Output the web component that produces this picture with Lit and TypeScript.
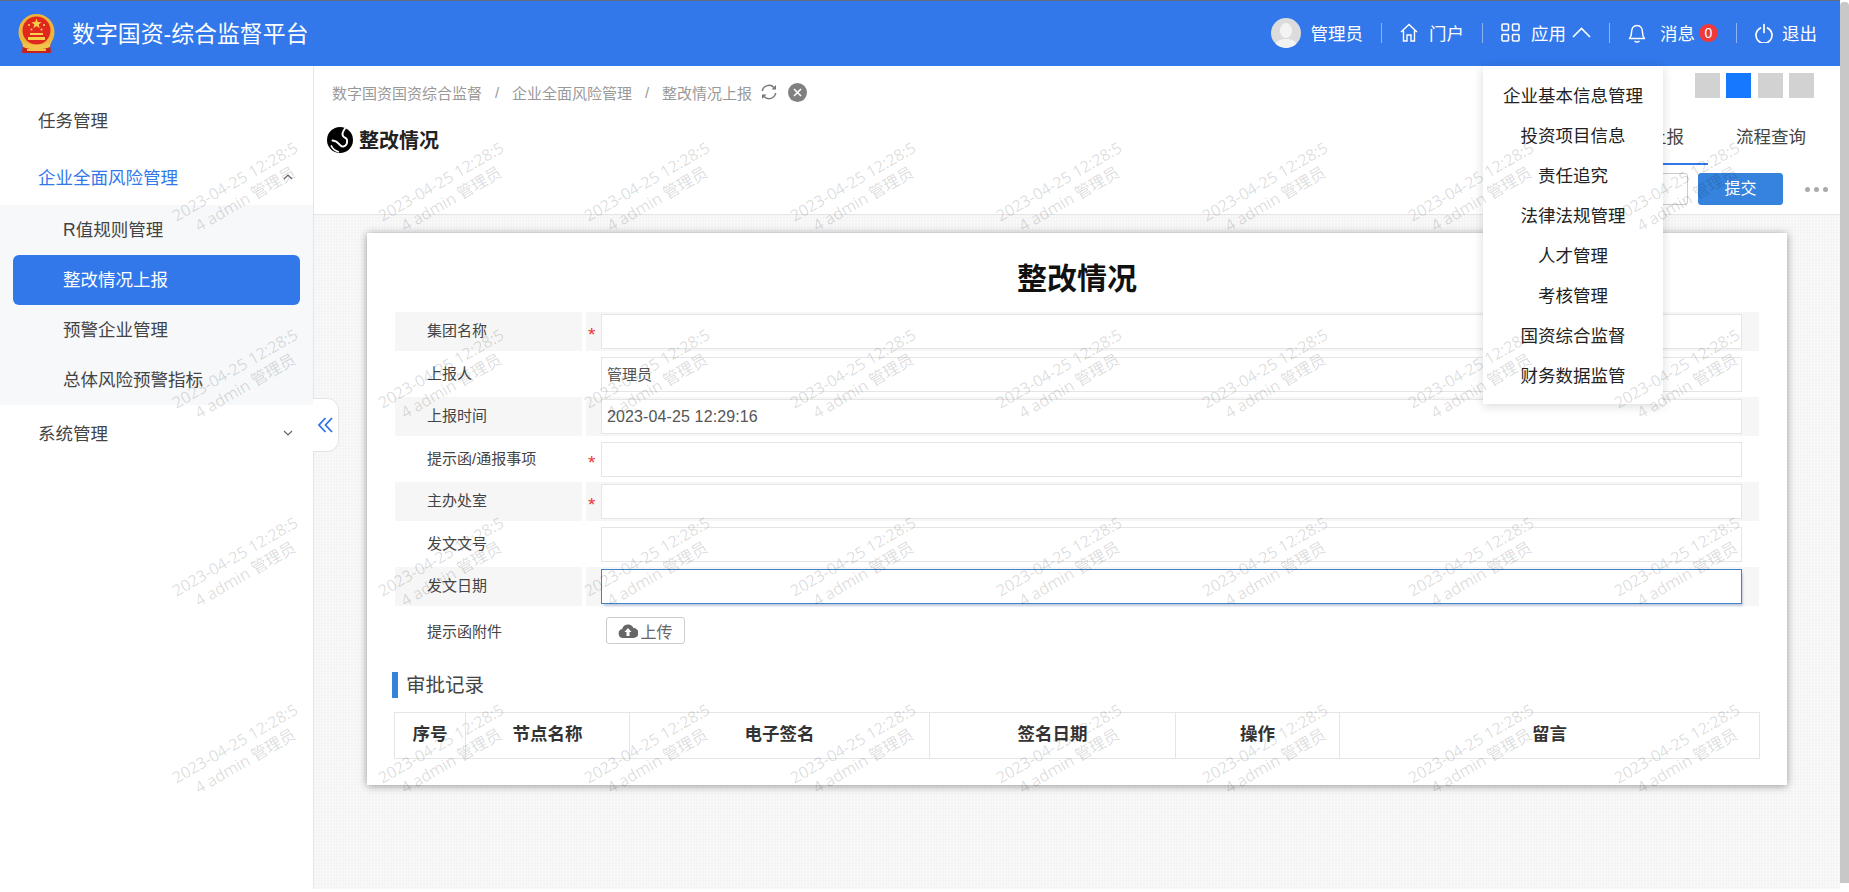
import { LitElement, html, css } from "lit";
import { customElement } from "lit/decorators.js";

const FORM_ROWS = [
  { label: "集团名称", required: true, value: "" },
  { label: "上报人", required: false, value: "管理员" },
  { label: "上报时间", required: false, value: "2023-04-25 12:29:16" },
  { label: "提示函/通报事项", required: true, value: "" },
  { label: "主办处室", required: true, value: "" },
  { label: "发文文号", required: false, value: "" },
  { label: "发文日期", required: false, value: "", focused: true },
];
const APP_MENU = ["企业基本信息管理", "投资项目信息", "责任追究", "法律法规管理", "人才管理", "考核管理", "国资综合监督", "财务数据监管"];
const TABLE_HEAD = ["序号", "节点名称", "电子签名", "签名日期", "操作", "留言"];

@customElement("app-root")
export class AppRoot extends LitElement {
  static styles = css`
    :host {
      display: block;
      width: 1849px;
      height: 892px;
      overflow: hidden;
      position: relative;
      background: #fff;
      font-family: "Liberation Sans", "Noto Sans CJK SC", sans-serif;
      color: #333;
    }
    .shell { display: flex; height: 889px; }
    .page { flex: 1; min-width: 0; display: flex; flex-direction: column; }
    .scrollbar { width: 9px; height: 881px; margin-top: 2px; background: #c8c8c8; border-radius: 4px 4px 0 0; }

    header {
      height: 66px;
      box-sizing: border-box;
      border-top: 1px solid #5f6b80;
      background: #3278ea;
      color: #fff;
      display: flex;
      align-items: center;
      flex: none;
      position: relative;
      z-index: 3;
    }
    .logo { margin-left: 18px; flex: none; display: block; }
    .brand { margin-left: 17px; font-size: 22.9px; flex: 1; padding-bottom: 3px; }
    .nav { display: flex; align-items: center; height: 100%; padding-right: 5px; font-size: 17.5px; }
    .nav-item { display: flex; align-items: center; height: 100%; box-sizing: border-box; padding: 0 18px 2px; gap: 11px; position: relative; }
    .nav-item svg { flex: none; display: block; }
    .nav-item.user { gap: 10px; }
    .nav-item.msg { gap: 14px; }
    .nav-item.quit { gap: 9px; }
    .divider { width: 1px; height: 20px; margin-bottom: 2px; background: rgba(255, 255, 255, 0.45); }
    .msg-text { display: flex; align-items: center; gap: 4px; }
    .badge {
      width: 19px; height: 18px; border-radius: 9px; background: #ee3a3a;
      font-size: 14px; line-height: 18px; text-align: center;
    }
    .apps-text { display: flex; align-items: center; gap: 6px; }
    .app-menu {
      position: absolute; left: 0; top: 100%; width: 180px;
      background: #fff; color: #222; padding: 10px 0 8px;
      box-shadow: 0 2px 10px rgba(0, 0, 0, 0.15);
    }
    .app-menu div { height: 40px; line-height: 40px; text-align: center; }

    .body { flex: 1; display: flex; min-height: 0; }
    .sidebar {
      width: 313px; flex: none; box-sizing: content-box; padding-top: 25px;
      background: #fff; border-right: 1px solid #e5e5e5; position: relative;
      font-size: 17.5px; color: #444;
    }
    .menu { height: 57px; display: flex; align-items: center; justify-content: space-between; padding: 0 20px 0 38px; }
    .menu.open { color: #3278ea; }
    .menu.last { margin-top: -1px; }
    .menu svg { display: block; }
    .sub { background: #f6f8fa; }
    .sub div { height: 50px; line-height: 50px; padding-left: 63px; }
    .sub .active {
      background: #3278ea; color: #fff; margin: 0 13px; padding-left: 50px; border-radius: 6px;
    }
    .collapse {
      position: absolute; left: 313px; top: 332px; width: 26px; height: 54px; box-sizing: border-box;
      background: #fff; border: 1px solid #e5e5e5; border-left: 0; border-radius: 0 12px 12px 0;
      display: flex; align-items: center; justify-content: center;
    }

    .main { flex: 1; min-width: 0; display: flex; flex-direction: column; }
    .top { flex: none; height: 149px; box-sizing: border-box; background: #fff; border-bottom: 1px solid #e5e5e5; padding-top: 7px; }
    .row1 { height: 38px; display: flex; justify-content: space-between; padding: 0 26px 0 18px; }
    .crumbs { display: flex; align-items: center; font-size: 15px; color: #999; }
    .crumbs .sep { width: 30px; text-align: center; }
    .crumbs .refresh { margin-left: 8px; }
    .crumbs .close { margin-left: 10px; }
    .swatches { display: flex; gap: 6.5px; }
    .swatches i { display: block; width: 25px; height: 25px; background: #d2d2d2; }
    .swatches i.on { background: #1677ff; }
    .row2 { height: 54px; display: flex; justify-content: space-between; padding: 0 10px 0 13px; }
    .page-title { display: flex; align-items: center; gap: 6px; font-size: 20px; font-weight: 700; color: #222; padding-top: 3px; height: 51px; }
    .tabs { display: flex; font-size: 17.5px; color: #444; }
    .tab { height: 54px; box-sizing: border-box; padding: 0 24px; line-height: 52px; }
    .tab.on { border-bottom: 2px solid #3278ea; }
    .tab + .tab { margin-left: 4px; }
    .row3 { display: flex; justify-content: flex-end; align-items: center; height: 32px; margin-top: 8px; padding-right: 12px; }
    .btn { width: 85px; height: 32px; box-sizing: border-box; border-radius: 3px; font-size: 16px; line-height: 30px; text-align: center; }
    .btn.plain { border: 1px solid #ccc; margin-right: 10px; color: #555; }
    .btn.primary { background: #3583dc; color: #fff; border: 1px solid #3583dc; }
    .dots { display: flex; gap: 4px; margin-left: 22px; }
    .dots i { width: 5px; height: 5px; border-radius: 50%; background: #aaa; }

    .canvas {
      flex: 1; padding: 18px 53px 0 53px;
      background-color: #f4f4f4;
      background-image:
        repeating-linear-gradient(0deg, rgba(255, 255, 255, 0.35) 0 1px, transparent 1px 3px),
        repeating-linear-gradient(90deg, rgba(255, 255, 255, 0.35) 0 1px, transparent 1px 3px);
    }
    .card {
      height: 552px; box-sizing: border-box; background: #fff; padding: 24px 27px 0 27px;
      box-shadow: 0 1px 8px rgba(0, 0, 0, 0.4);
    }
    h1 { margin: 0 0 11px; font-size: 30px; line-height: 44px; font-weight: 700; text-align: center; color: #111; }
    .form { margin: 0 1px; display: grid; grid-template-columns: 187px 1fr; grid-auto-rows: 39px; column-gap: 4px; row-gap: 3.5px; font-size: 15px; }
    .label { padding-left: 32px; line-height: 37px; color: #444; }
    .value { position: relative; padding: 2px 17px 2px 15px; }
    .shade { background: #f6f6f6; }
    .star { position: absolute; left: 2px; top: 11px; color: #e33; font-size: 19px; line-height: 24px; }
    .input {
      height: 35px; box-sizing: border-box; border: 1px solid #e5e5e5; background: #fff;
      padding-left: 5px; line-height: 33px; font-size: 15px; color: #555;
    }
    .input.focus { border-color: #3f84c8; box-shadow: 2px 3px 2px -1px #c5cbe0; }
    .input.date { font-size: 16px; letter-spacing: 0.12px; }
    .upload-row { grid-column: 1 / -1; display: grid; grid-template-columns: 187px 1fr; column-gap: 4px; height: 39px; }
    .upload-row .label { line-height: 43px; }
    .upload-cell { padding: 7.5px 0 0 20px; }
    .upload {
      width: 79px; height: 27px; box-sizing: border-box; border: 1px solid #ccc; border-radius: 3px;
      display: flex; align-items: center; justify-content: center; gap: 2px; font-size: 16px; color: #666;
    }
    .section {
      margin: 23.5px 0 0 -2px; height: 26px; border-left: 6px solid #3583dc; padding-left: 8px;
      font-size: 19.5px; line-height: 26px; color: #444;
    }
    .table {
      margin-top: 14px; height: 47px; box-sizing: border-box; border: 1px solid #e5e5e5;
      display: grid; grid-template-columns: 70px 164px 300px 246px 164px 1fr;
      font-size: 17.5px; font-weight: 700; color: #333;
    }
    .table div { line-height: 43px; text-align: center; border-left: 1px solid #e5e5e5; }
    .table div:first-child { border-left: 0; }

    .watermarks {
      position: absolute; left: 137px; top: 96px; pointer-events: none; z-index: 5;
      display: grid; grid-template-columns: repeat(8, 206px); grid-auto-rows: 187.5px;
      font-family: "Open Sans", "Noto Sans CJK SC", sans-serif; font-size: 16px; line-height: 20px; color: rgba(0, 0, 0, 0.15);
    }
    .wm { display: flex; align-items: center; justify-content: center; }
    .wm span { display: block; white-space: nowrap; text-align: center; transform: rotate(-30deg); }
  `;

  private emblem() {
    return html`<svg class="logo" width="37" height="40" viewBox="0 0 37 40">
      <path d="M5 29h27l1 10H4z" fill="#c8201c" />
      <circle cx="18.5" cy="18" r="18" fill="#eeb53a" />
      <circle cx="18.5" cy="16.5" r="14" fill="#e0281f" />
      <path d="M18.5 4.5l1.3 3.6 3.8.1-3 2.3 1.1 3.7-3.2-2.2-3.2 2.2 1.1-3.7-3-2.3 3.8-.1z" fill="#f6d04a" />
      <g fill="#f6d04a">
        <circle cx="11" cy="11" r="1.1" /><circle cx="26" cy="11" r="1.1" />
        <circle cx="13.5" cy="15.5" r="1" /><circle cx="23.5" cy="15.5" r="1" />
        <path d="M12 19h13v2H12zM10 23h17v3H10z" />
      </g>
      <path d="M4 27c5 5 24 5 29 0l-1 6c-6 3-21 3-27 0z" fill="#f2c24a" />
      <path d="M9 35h19v2H9z" fill="#f2c24a" />
    </svg>`;
  }

  private globe() {
    return html`<svg width="26" height="26" viewBox="0 0 26 26">
      <circle cx="13" cy="13" r="13" fill="#000" />
      <path d="M18 1.500c-2 2.500-3 5.500-2 7.500s3.500 1.500 4 4-.5 4.500-1.500 5.500-3.500 1.500-5 0-3-4.500-8-5"
        fill="none" stroke="#fff" stroke-width="1.900" stroke-linecap="round" />
      <path d="M4.300 18.900c1.500 3 4 5 7 5.800" fill="none" stroke="#fff" stroke-width="1.700" stroke-linecap="round" />
    </svg>`;
  }

  private chevron(up: boolean, size = 10, color = "#666", width = 1.2) {
    const d = up ? "M1 7l4-4 4 4" : "M1 3l4 4 4-4";
    return html`<svg width=${size} height=${size} viewBox="0 0 10 10">
      <path d=${d} fill="none" stroke=${color} stroke-width=${width} />
    </svg>`;
  }

  render() {
    return html`
      <div class="shell">
        <div class="page">
          <header>
            ${this.emblem()}
            <div class="brand">数字国资-综合监督平台</div>
            <div class="nav">
              <div class="nav-item user">
                <svg width="30" height="30" viewBox="0 0 30 30">
                  <clipPath id="av"><circle cx="15" cy="15" r="15" /></clipPath>
                  <g clip-path="url(#av)">
                    <rect width="30" height="30" fill="#dcdcdc" />
                    <ellipse cx="15" cy="12.500" rx="6" ry="7.500" fill="#f3f3f3" />
                    <path d="M3 30c1-7 6-9 12-9s11 2 12 9z" fill="#f3f3f3" />
                  </g>
                </svg>
                <span>管理员</span>
              </div>
              <i class="divider"></i>
              <div class="nav-item">
                <svg width="18" height="19" viewBox="0 0 18 19" fill="none" stroke="#fff" stroke-width="1.400">
                  <path d="M1 9l8-7.500L17 9M3.500 7.500V18h3.500v-6h4v6h3.500V7.500" />
                </svg>
                <span>门户</span>
              </div>
              <i class="divider"></i>
              <div class="nav-item">
                <svg width="19" height="19" viewBox="0 0 19 19" fill="none" stroke="#fff" stroke-width="1.600">
                  <rect x="1" y="1" width="6.500" height="6.500" rx="1" />
                  <rect x="11.500" y="1" width="6.500" height="6.500" rx="1" />
                  <rect x="1" y="11.500" width="6.500" height="6.500" rx="1" />
                  <rect x="11.500" y="11.500" width="6.500" height="6.500" rx="1" />
                </svg>
                <span class="apps-text">应用
                  <svg width="19" height="11" viewBox="0 0 19 11" fill="none" stroke="#fff" stroke-width="1.600">
                    <path d="M1 10l8.500-8.500L18 10" />
                  </svg>
                </span>
                <div class="app-menu">${APP_MENU.map((m) => html`<div>${m}</div>`)}</div>
              </div>
              <i class="divider"></i>
              <div class="nav-item msg">
                <svg width="18" height="20" viewBox="0 0 18 20" fill="none" stroke="#fff" stroke-width="1.500">
                  <path d="M1.500 15.500c1.500-1.500 2-3 2-6 0-4 2-7 5.500-7s5.500 3 5.500 7c0 3 .5 4.500 2 6z" stroke-linejoin="round" />
                  <path d="M6.500 18c1.500 1.300 3.500 1.300 5 0" />
                </svg>
                <span class="msg-text">消息<span class="badge">0</span></span>
              </div>
              <i class="divider"></i>
              <div class="nav-item quit">
                <svg width="18" height="20" viewBox="0 0 18 20" fill="none" stroke="#fff" stroke-width="1.700">
                  <path d="M5.500 5a8 8 0 1 0 7 0M9 1.500v8" stroke-linecap="round" />
                </svg>
                <span>退出</span>
              </div>
            </div>
          </header>
          <div class="body">
            <aside class="sidebar">
              <div class="menu">任务管理</div>
              <div class="menu open">企业全面风险管理 ${this.chevron(true)}</div>
              <div class="sub">
                <div>R值规则管理</div>
                <div class="active">整改情况上报</div>
                <div>预警企业管理</div>
                <div>总体风险预警指标</div>
              </div>
              <div class="menu last">系统管理 ${this.chevron(false)}</div>
              <div class="collapse">
                <svg width="15" height="16" viewBox="0 0 15 16" fill="none" stroke="#2f73e6" stroke-width="1.800">
                  <path d="M7.500 1L1 8l6.500 7M14 1L7.500 8l6.500 7" />
                </svg>
              </div>
            </aside>
            <div class="main">
              <div class="top">
                <div class="row1">
                  <div class="crumbs">
                    <span>数字国资国资综合监督</span><span class="sep">/</span>
                    <span>企业全面风险管理</span><span class="sep">/</span>
                    <span>整改情况上报</span>
                    <svg class="refresh" width="18" height="18" viewBox="0 0 18 18">
                      <path d="M2.300 8A6.800 6.800 0 0 1 14 4.500M15.700 10A6.800 6.800 0 0 1 4 13.500" fill="none" stroke="#777" stroke-width="1.500" />
                      <path d="M16 2v4.500h-4.500zM2 16v-4.500h4.500z" fill="#777" />
                    </svg>
                    <svg class="close" width="19" height="19" viewBox="0 0 19 19">
                      <circle cx="9.500" cy="9.500" r="9.500" fill="#808080" />
                      <path d="M6 6l7 7M13 6l-7 7" stroke="#fff" stroke-width="1.600" />
                    </svg>
                  </div>
                  <div class="swatches"><i></i><i class="on"></i><i></i><i></i></div>
                </div>
                <div class="row2">
                  <div class="page-title">${this.globe()}<span>整改情况</span></div>
                  <div class="tabs">
                    <div class="tab on">整改情况上报</div>
                    <div class="tab">流程查询</div>
                  </div>
                </div>
                <div class="row3">
                  <div class="btn plain">保存</div>
                  <div class="btn primary">提交</div>
                  <div class="dots"><i></i><i></i><i></i></div>
                </div>
              </div>
              <div class="canvas">
                <div class="card">
                  <h1>整改情况</h1>
                  <div class="form">
                    ${FORM_ROWS.map((r, i) => {
                      const shade = i % 2 === 0 ? "shade" : "";
                      const inputCls = `input ${r.focused ? "focus" : ""} ${r.label === "上报时间" ? "date" : ""}`;
                      return html`
                        <div class="label ${shade}">${r.label}</div>
                        <div class="value ${shade}">
                          ${r.required ? html`<span class="star">*</span>` : ""}
                          <div class=${inputCls}>${r.value}</div>
                        </div>
                      `;
                    })}
                    <div class="upload-row">
                      <div class="label">提示函附件</div>
                      <div class="upload-cell">
                        <div class="upload">
                          <svg width="20" height="14" viewBox="0 0 20 14">
                            <path d="M5 14a4.500 4.500 0 0 1-.8-8.900A6 6 0 0 1 15.500 4 5 5 0 0 1 15.500 14z" fill="#666" />
                            <path d="M10 4l3.500 4h-2v4h-3V8h-2z" fill="#fff" />
                          </svg>
                          <span>上传</span>
                        </div>
                      </div>
                    </div>
                  </div>
                  <div class="section">审批记录</div>
                  <div class="table">${TABLE_HEAD.map((h) => html`<div>${h}</div>`)}</div>
                </div>
              </div>
            </div>
          </div>
        </div>
        <div class="scrollbar"></div>
      </div>
      <div class="watermarks">
        ${Array.from({ length: 32 }, () => html`<div class="wm"><span>2023-04-25 12:28:5<br />4 admin 管理员</span></div>`)}
      </div>
    `;
  }
}
